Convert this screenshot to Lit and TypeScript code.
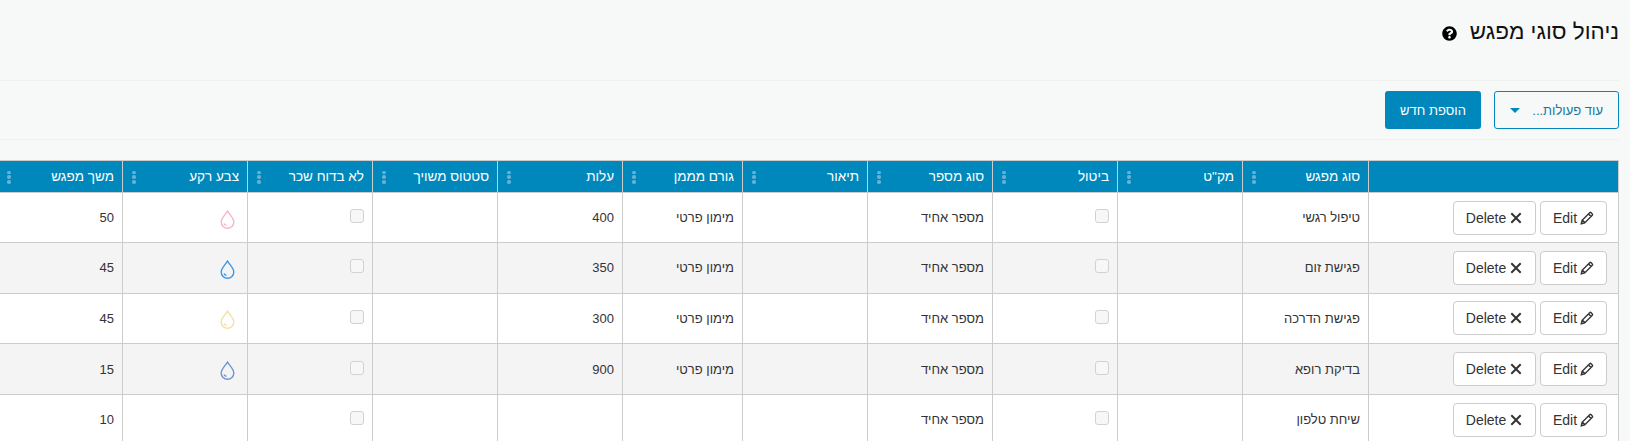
import { LitElement, html, css, svg } from "lit";
import { customElement } from "lit/decorators.js";

const cols = [250, 126, 125, 125, 125, 125, 120, 125, 125, 125, 125];
const heads = ["", "סוג מפגש", "מק\"ט", "ביטול", "סוג מספר", "תיאור", "גורם מממן", "עלות", "סטטוס משויך", "לא בדוח שכר", "צבע רקע", "משך מפגש"];

const rows = [
  { name: "טיפול רגשי", cost: "400", fund: "מימון פרטי", color: "#f9b4cb", dur: "50" },
  { name: "פגישת זום", cost: "350", fund: "מימון פרטי", color: "#3d96e6", dur: "45" },
  { name: "פגישת הדרכה", cost: "300", fund: "מימון פרטי", color: "#f2e0a8", dur: "45" },
  { name: "בדיקת רופא", cost: "900", fund: "מימון פרטי", color: "#6f94d6", dur: "15" },
  { name: "שיחת טלפון", cost: "", fund: "", color: "", dur: "10" },
];

const help = svg`<path d="M504 256c0 136.997-111.043 248-248 248S8 392.997 8 256C8 119.083 119.043 8 256 8s248 111.083 248 248zM262.655 90c-54.497 0-89.255 22.957-116.549 63.758-3.536 5.286-2.353 12.415 2.715 16.258l34.699 26.31c5.205 3.947 12.621 3.008 16.665-2.122 17.864-22.658 30.113-35.797 57.303-35.797 20.429 0 45.698 13.148 45.698 32.958 0 14.976-12.363 22.667-32.534 33.976C247.128 238.528 216 254.941 216 296v4c0 6.627 5.373 12 12 12h56c6.627 0 12-5.373 12-12v-1.333c0-28.462 83.186-29.647 83.186-106.667 0-58.002-60.165-102-116.531-102zM256 338c-25.365 0-46 20.635-46 46 0 25.364 20.635 46 46 46s46-20.636 46-46c0-25.365-20.635-46-46-46z"/>`;

@customElement("app-root")
export class AppRoot extends LitElement {
  static styles = css`
    :host {
      display: block;
      height: 100vh;
      overflow: hidden;
      background: #f7f8f8;
      direction: rtl;
      font-family: "Liberation Sans", Arial, sans-serif;
      color: #333;
      font-size: 13px;
    }
    .title {
      height: 81px;
      box-sizing: border-box;
      margin-right: 11px;
      padding-top: 18px;
      display: flex;
      align-items: flex-start;
      gap: 13px;
      border-bottom: 1px solid #f0f1f1;
    }
    h1 {
      margin: 0;
      font-size: 22.5px;
      line-height: 28px;
      font-weight: 400;
      color: #111;
    }
    .help {
      width: 15px;
      height: 15px;
      margin-top: 8px;
      fill: #000;
    }
    .actions {
      height: 59px;
      box-sizing: border-box;
      margin-right: 11px;
      padding-top: 10px;
      display: flex;
      gap: 13px;
      border-bottom: 1px solid #f0f1f1;
    }
    .more, .add {
      height: 38px;
      box-sizing: border-box;
      border-radius: 3px;
      font-size: 13px;
      display: flex;
      align-items: center;
    }
    .more {
      width: 125px;
      border: 1px solid #0088bc;
      color: #1478a5;
      padding: 0 15px;
      justify-content: space-between;
    }
    .caret {
      width: 0;
      height: 0;
      border-left: 5px solid transparent;
      border-right: 5px solid transparent;
      border-top: 5px solid #0088bc;
    }
    .add {
      width: 96px;
      background: #0088bc;
      color: #fff;
      justify-content: center;
      font-weight: 400;
      font-size: 13px;
    }
    .wrap {
      margin-top: 20px;
      margin-right: 11px;
      overflow: hidden;
      display: flex;
    }
    table {
      flex: none;
      table-layout: fixed;
      border-collapse: collapse;
      border-spacing: 0;
      width: 1621px;
      border-top: 1px solid #ccc;
      border-right: 1px solid #ccc;
    }
    th {
      height: 32px;
      box-sizing: border-box;
      background: #0088bc;
      color: #fff;
      font-weight: 400;
      font-size: 13.5px;
      text-align: right;
      padding: 0 8px;
      border-left: 1px solid #ccc;
      border-bottom: 1px solid #ccc;
    }
    .th {
      display: flex;
      align-items: center;
      justify-content: space-between;
    }
    .dots {
      display: flex;
      flex-direction: column;
      gap: 1.25px;
      margin-left: 1px;
      margin-top: 1px;
    }
    .dots i {
      width: 3.5px;
      height: 3.5px;
      border-radius: 50%;
      background: #66b2d4;
    }
    td {
      height: 50.67px;
      box-sizing: border-box;
      background: #fff;
      font-size: 13px;
      padding: 0 8px;
      text-align: right;
      vertical-align: middle;
      border-left: 1px solid #ccc;
      border-bottom: 1px solid #ccc;
    }
    tr:first-child td {
      height: 50px;
    }
    tr:nth-child(even) td {
      background: #f4f4f4;
    }
    .btns {
      display: flex;
      gap: 4px;
      padding-right: 3px;
    }
    .btn {
      height: 34px;
      box-sizing: border-box;
      display: flex;
      align-items: center;
      justify-content: center;
      gap: 3px;
      background: #fff;
      border: 1px solid #ccc;
      border-radius: 4px;
      font-size: 14px;
      direction: ltr;
      color: #333;
    }
    .edit { width: 67px; }
    .del { width: 83px; }
    .btn svg { width: 14px; height: 14px; fill: #333; }
    .btn svg.pen { fill: none; stroke: #333; stroke-width: 1.4; }
    .check {
      width: 14px;
      height: 14px;
      box-sizing: border-box;
      display: block;
      border: 1px solid #d2d2d2;
      border-radius: 3px;
      background: #f7f7f7;
      margin-top: -3px;
    }
    .drop {
      display: block;
      width: 15px;
      height: 19px;
      margin: 3px 4.5px 0 0;
      fill: none;
      stroke-width: 1.4;
    }
  `;

  private dots() {
    return html`<span class="dots"><i></i><i></i><i></i></span>`;
  }

  private row(r: (typeof rows)[number]) {
    return html`<tr>
      <td>
        <div class="btns">
          <div class="btn edit">
            <span>Edit</span>
            <svg class="pen" viewBox="0 0 14 14"><path d="M1.300 12.700l.8-3.400L9.700 1.700a1 1 0 0 1 1.400 0l1.200 1.200a1 1 0 0 1 0 1.400L4.700 11.900zM8.500 2.900l2.600 2.600M2.600 9.200l2.200 2.200"/></svg>
          </div>
          <div class="btn del">
            <span>Delete</span>
            <svg viewBox="0 0 14 14"><path d="M3 1.600 7 5.600l4-4L12.400 3l-4 4 4 4-1.400 1.400-4-4-4 4L1.600 11l4-4-4-4z"/></svg>
          </div>
        </div>
      </td>
      <td>${r.name}</td>
      <td></td>
      <td><span class="check"></span></td>
      <td>מספר אחיד</td>
      <td></td>
      <td>${r.fund}</td>
      <td>${r.cost}</td>
      <td></td>
      <td><span class="check"></span></td>
      <td>${r.color
        ? html`<svg class="drop" viewBox="0 0 15 19" style="stroke:${r.color}">
            <path d="M7.500 1C6 4 1.200 8 1.200 12a6.300 6.300 0 0 0 12.600 0C13.800 8 9 4 7.500 1z" />
            <path d="M4 13.500c.5 1 1.200 1.500 2.500 1.800" />
          </svg>`
        : ""}</td>
      <td>${r.dur}</td>
    </tr>`;
  }

  render() {
    return html`
      <div class="title">
        <h1>ניהול סוגי מפגש</h1>
        <svg class="help" viewBox="0 0 512 512">${help}</svg>
      </div>
      <div class="actions">
        <div class="more"><span>עוד פעולות...</span><span class="caret"></span></div>
        <div class="add">הוספת חדש</div>
      </div>
      <div class="wrap">
        <table>
          <colgroup>
            ${cols.map((w) => html`<col style="width:${w}px" />`)}
            <col style="width:125px" />
          </colgroup>
          <thead>
            <tr>
              ${heads.map(
                (h, i) => html`<th>${i === 0 ? "" : html`<div class="th"><span>${h}</span>${this.dots()}</div>`}</th>`
              )}
            </tr>
          </thead>
          <tbody>${rows.map((r) => this.row(r))}</tbody>
        </table>
      </div>
    `;
  }
}
